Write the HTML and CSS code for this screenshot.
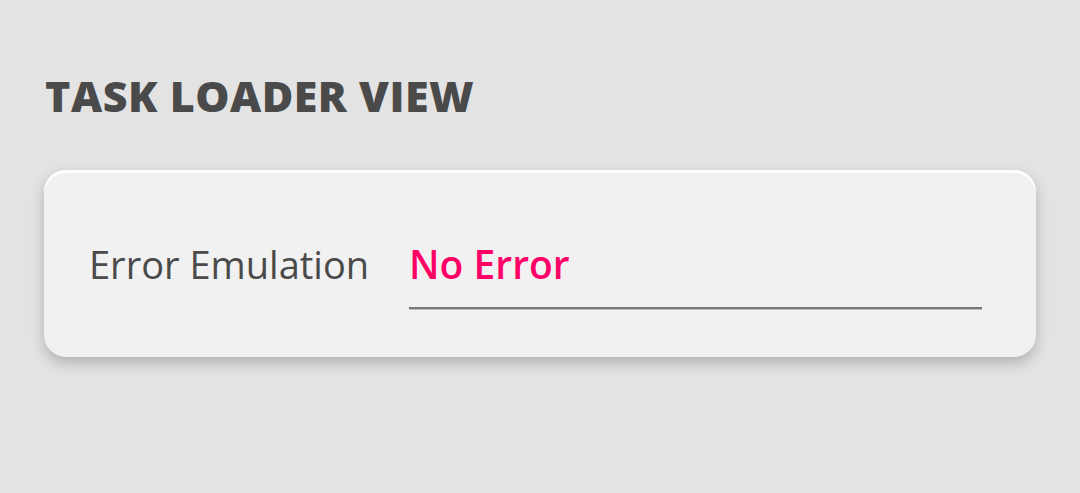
FILE: index.html
```html
<!DOCTYPE html>
<html lang="en">
<head>
  <meta charset="UTF-8">
  <title>Task Loader View</title>
  <link rel="stylesheet" href="styles.css">
</head>
<body>
  <div class="page">
    <h1 class="title">TASK LOADER VIEW</h1>
    <div class="card">
      <span class="label">Error Emulation</span>
      <div class="select">No Error</div>
    </div>
  </div>
</body>
</html>
```

FILE: styles.css
```css
body { margin: 0; background: #e3e3e3; font-family: 'Open Sans', sans-serif; color: #4a4a4a; }
.page { padding: 66px 44px 60px 44px; }
.title { margin: 0 0 44px 1px; font-size: 43px; font-weight: 800; line-height: 60px; letter-spacing: 0.5px; }
.card { width: 992px; box-sizing: border-box; height: 187px; display: flex; align-items: center; padding: 0 54px 0 45px; background: #f1f1f1; border-radius: 22px; box-shadow: inset 0 3px 0 #fff, 0 6px 14px rgba(0,0,0,0.22); }
.label { font-size: 38px; line-height: 50px; white-space: nowrap; margin-right: 40px; }
.select { flex: 1; color: #ff0066; font-size: 39px; font-weight: 600; line-height: 50px; padding-bottom: 18px; border-bottom: 2px solid #777; box-shadow: 0 1px 0 #bbb; margin-top: 20px; }
```
